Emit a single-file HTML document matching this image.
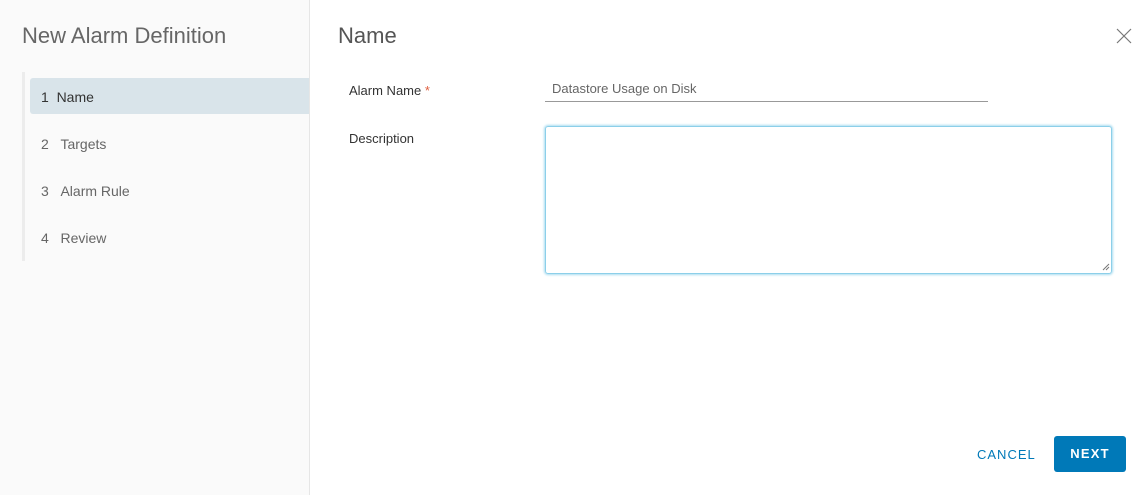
<!DOCTYPE html>
<html><head><style>
*{margin:0;padding:0;box-sizing:border-box}
body{width:1148px;height:495px;background:#fff;font-family:"Liberation Sans",sans-serif;position:relative;overflow:hidden;color:#333}
.left{position:absolute;left:0;top:0;width:310px;height:495px;background:#fafafa;border-right:1px solid #e6e6e6}
.t{position:absolute;font-weight:300}
.bar{position:absolute;left:22px;top:72px;width:3px;height:189px;background:#ececec}
.act{position:absolute;left:30px;top:78px;width:279px;height:36px;background:#d9e4ea;border-radius:3px 0 0 3px}
.nav{position:absolute;left:41px;font-size:14px;color:#666;line-height:20px}
.lbl{position:absolute;left:349px;font-size:13px;color:#333;line-height:16px}
</style></head><body>
<div class="left">
<div class="t" style="left:22px;top:23px;font-size:22px;color:#666">New Alarm Definition</div>
<div class="bar"></div>
<div class="act"></div>
<div class="nav" style="top:87px;color:#333">1&nbsp;&nbsp;Name</div>
<div class="nav" style="top:134px">2&nbsp;&nbsp;&nbsp;Targets</div>
<div class="nav" style="top:181px">3&nbsp;&nbsp;&nbsp;Alarm Rule</div>
<div class="nav" style="top:228px">4&nbsp;&nbsp;&nbsp;Review</div>
</div>
<div class="t" style="left:338px;top:23px;font-size:22px;color:#555">Name</div>
<svg style="position:absolute;left:1116px;top:28px" width="16" height="16" viewBox="0 0 16 16"><path d="M1 1L15 15M15 1L1 15" stroke="#777" stroke-width="1.2"/></svg>
<div class="lbl" style="top:83px">Alarm Name <span style="color:#e06040">*</span></div>
<div class="lbl" style="top:131px">Description</div>
<div style="position:absolute;left:545px;top:80px;width:443px;height:22px;border-bottom:1px solid #999;font-size:13px;color:#666;padding-left:7px;line-height:17px">Datastore Usage on Disk</div>
<div style="position:absolute;left:545px;top:126px;width:567px;height:148px;border:1px solid #8ccfe9;box-shadow:0 0 2px 1px #aadcf0;border-radius:3px"></div>
<svg style="position:absolute;left:1101px;top:262px" width="9" height="9"><path d="M8 2L2 8M8 5L5 8" stroke="#777" stroke-width="1"/></svg>
<div style="position:absolute;left:977px;top:447px;font-size:13px;color:#0079b8;letter-spacing:1px;line-height:15px">CANCEL</div>
<div style="position:absolute;left:1054px;top:436px;width:72px;height:36px;background:#0079b8;border-radius:3px;color:#fff;font-size:13px;font-weight:bold;letter-spacing:1.2px;text-align:center;line-height:36px">NEXT</div>
</body></html>
